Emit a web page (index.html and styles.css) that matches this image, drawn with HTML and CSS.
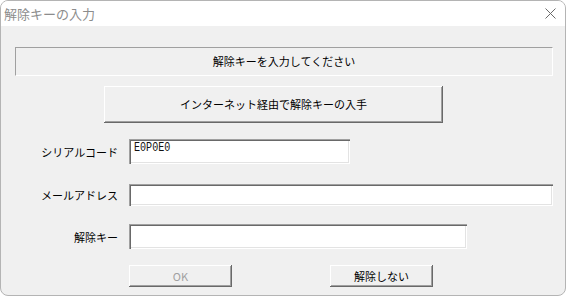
FILE: index.html
```html
<!DOCTYPE html>
<html lang="ja">
<head>
<meta charset="utf-8">
<title>解除キーの入力</title>
<link rel="stylesheet" href="styles.css">
</head>
<body>
<div class="window">
  <div class="titlebar">
    <span class="title">解除キーの入力</span>
    <span class="close">
      <svg width="11" height="11" viewBox="0 0 11 11"><path d="M0.5 0.5 L10.5 10.5 M10.5 0.5 L0.5 10.5" stroke="#6a6a6a" stroke-width="1" fill="none"/></svg>
    </span>
  </div>
  <div class="content">
    <div class="info">解除キーを入力してください</div>
    <div class="net-row">
      <div class="btn btn-net">インターネット経由で解除キーの入手</div>
    </div>
    <div class="field field-serial">
      <span class="label">シリアルコード</span>
      <div class="input input-serial"><span class="mono">E0P0E0</span></div>
    </div>
    <div class="field field-mail">
      <span class="label">メールアドレス</span>
      <div class="input input-mail"></div>
    </div>
    <div class="field field-key">
      <span class="label">解除キー</span>
      <div class="input input-key"></div>
    </div>
    <div class="actions">
      <div class="btn btn-small btn-disabled">OK</div>
      <div class="btn btn-small btn-cancel">解除しない</div>
    </div>
  </div>
</div>
</body>
</html>
```

FILE: styles.css
```css
* { box-sizing: border-box; }
html, body { margin: 0; padding: 0; background: #ffffff; }
body {
  font-family: "Noto Sans CJK JP", "Noto Sans", sans-serif;
  font-size: 11px;
  color: #000;
}
.window {
  width: 566px;
  height: 296px;
  border: 1px solid #b4b4b4;
  border-radius: 8px;
  background: #f0f0f0;
  overflow: hidden;
}
.titlebar {
  height: 25px;
  background: #ffffff;
  display: flex;
  align-items: center;
  justify-content: space-between;
  padding: 0 9px 1px 3px;
}
.title {
  font-size: 13px;
  color: #8c8c8c;
}
.close { display: flex; align-items: center; padding-top: 1px; }
.content {
  padding: 21px 0 0 14px;
}
.info {
  width: 538px;
  height: 29px;
  border-top: 1px solid #a0a0a0;
  border-left: 1px solid #a0a0a0;
  border-bottom: 1px solid #ffffff;
  border-right: 1px solid #ffffff;
  display: flex;
  align-items: center;
  justify-content: center;
  padding-bottom: 1px;
}
.net-row {
  margin-top: 10px;
  padding-left: 89px;
}
.btn {
  background: #f0f0f0;
  box-shadow: inset -1px -1px #696969, inset 1px 1px #ffffff, inset -2px -2px #a0a0a0;
  display: flex;
  align-items: center;
  justify-content: center;
}
.btn-net {
  width: 339px;
  height: 37px;
  padding-bottom: 2px;
}
.field {
  display: flex;
  align-items: center;
}
.label {
  width: 103px;
  text-align: right;
  margin-right: 11px;
}
.input {
  background: #ffffff;
  box-shadow: inset 1px 1px #a0a0a0, inset 2px 2px #696969, inset -1px -1px #ffffff, inset -2px -2px #e3e3e3;
}
.field-serial { margin-top: 16px; }
.input-serial {
  width: 221px;
  height: 25px;
  padding: 3px 0 0 5px;
  line-height: 0;
}
.mono {
  font-family: "Liberation Mono", monospace;
  font-size: 12px;
  line-height: 12px;
  display: inline-block;
  transform: scaleX(0.84);
  transform-origin: top left;
  color: #111;
}
.field-mail { margin-top: 20px; }
.input-mail { width: 424px; height: 22px; }
.field-key { margin-top: 18px; }
.input-key { width: 338px; height: 25px; }
.actions {
  margin-top: 16px;
  padding-left: 114px;
  display: flex;
  gap: 98px;
}
.btn-small {
  width: 103px;
  height: 22px;
  padding-bottom: 1px;
}
.btn-disabled { color: #a0a0a0; }
```
